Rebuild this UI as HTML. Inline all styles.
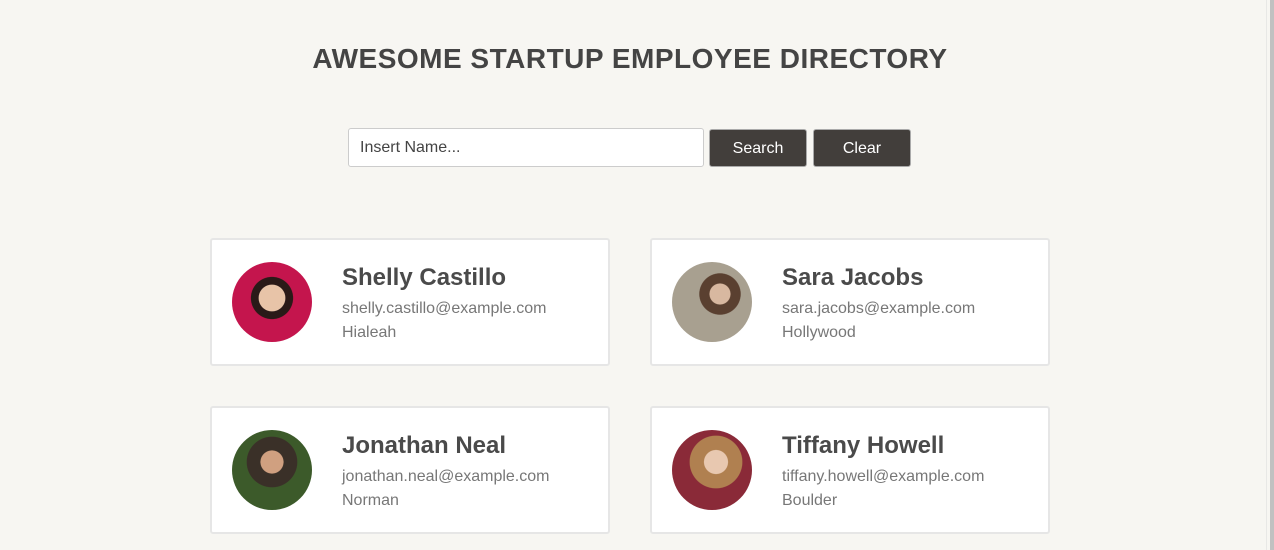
<!DOCTYPE html>
<html><head><style>
body{margin:0;width:1274px;height:550px;overflow:hidden;background:#f7f6f2;font-family:"Liberation Sans",Arial,sans-serif;position:relative}
.sb{position:absolute;top:0;right:0;width:4px;height:550px;background:#c1c1c1}
.sl{position:absolute;top:0;left:1266px;width:1px;height:550px;background:#e8e8e6}
h1{position:absolute;top:43px;left:0;width:1260px;text-align:center;margin:0;font-size:28px;font-weight:bold;color:#444;letter-spacing:0.5px}
.in{position:absolute;left:348px;top:128px;border:1px solid #ccc;border-radius:3px;background:#fff;box-sizing:border-box;width:356px;height:39px;font-size:16px;color:#444;padding:10px 11px}
.bt{position:absolute;top:129px;height:38px;width:98px;background:#423e3b;color:#fff;border-radius:3px;font-size:16px;text-align:center;line-height:37px;border:1px solid #aaa;box-sizing:border-box}
.card{position:absolute;width:400px;height:128px;background:#fff;border:2px solid #e6e6e6;border-radius:3px;box-sizing:border-box}
.av{position:absolute;left:20px;top:22px;width:80px;height:80px;border-radius:50%}
.nm{position:absolute;left:130px;top:24px;font-size:24px;font-weight:bold;color:#4a4a4a}
.em{position:absolute;left:130px;top:60px;font-size:16px;color:#777}
.ct{position:absolute;left:130px;top:84px;font-size:16px;color:#777}
</style></head><body>
<div class="sl"></div><div class="sb"></div>
<h1>AWESOME STARTUP EMPLOYEE DIRECTORY</h1>
<div class="in">Insert Name...</div>
<div class="bt" style="left:709px">Search</div>
<div class="bt" style="left:813px">Clear</div>
<div class="card" style="left:210px;top:238px"><div class="av" style="background:radial-gradient(circle at 50% 45%,#e8c4a8 0 22%,#2a1a18 23% 35%,#c4154d 36%)"></div><div class="nm">Shelly Castillo</div><div class="em">shelly.castillo@example.com</div><div class="ct">Hialeah</div></div>
<div class="card" style="left:650px;top:238px"><div class="av" style="background:radial-gradient(circle at 60% 40%,#d8b8a0 0 15%,#5a4030 16% 30%,#a8a090 31%)"></div><div class="nm">Sara Jacobs</div><div class="em">sara.jacobs@example.com</div><div class="ct">Hollywood</div></div>
<div class="card" style="left:210px;top:406px"><div class="av" style="background:radial-gradient(circle at 50% 40%,#d0a080 0 18%,#3a3028 19% 40%,#3c5a2a 41%)"></div><div class="nm">Jonathan Neal</div><div class="em">jonathan.neal@example.com</div><div class="ct">Norman</div></div>
<div class="card" style="left:650px;top:406px"><div class="av" style="background:radial-gradient(circle at 55% 40%,#e8c8b0 0 18%,#b08050 19% 40%,#8a2a38 41%)"></div><div class="nm">Tiffany Howell</div><div class="em">tiffany.howell@example.com</div><div class="ct">Boulder</div></div>
</body></html>
